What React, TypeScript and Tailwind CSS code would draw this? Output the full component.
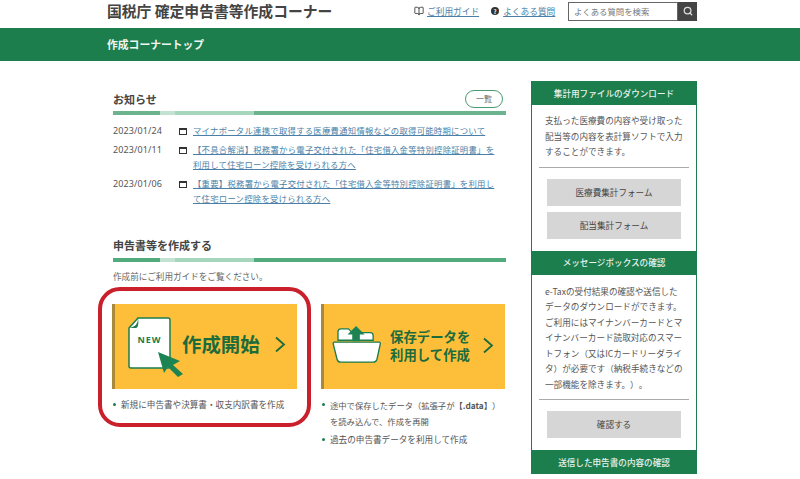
import React from "react";
import { BookOpen, Search } from "lucide-react";

const font = { fontFamily: '"Noto Sans CJK JP","Noto Sans",sans-serif' };

function Rule({ dark = "bg-[#6cb48d]" }: { dark?: string }) {
  return (
    <div className="flex h-[4px] w-[393px]">
      <div className={`w-[47px] ${dark}`} />
      <div className="w-[15px] bg-[#c2e3d1]" />
      <div className="w-[79px] bg-[#a6d6bc]" />
      <div className={`flex-1 ${dark}`} />
    </div>
  );
}

function NoticeRow({ date, text }: { date: string; text: string }) {
  return (
    <div className="flex leading-[15px]">
      <div className="h-[15px] w-[66px] text-[9px] leading-[16px] text-[#555] tracking-[0.1px]" style={{ fontFamily: '"Noto Sans",sans-serif' }}>{date}</div>
      <div className="mt-[5px] h-[7px] w-[8px] shrink-0 border border-t-2 border-[#333]" />
      <div className="ml-[6px] w-[302px] text-[8.33px] tracking-[0.28px] text-[#4b7fa8] underline">{text}</div>
    </div>
  );
}

function DocIcon() {
  return (
    <svg width="60" height="64" viewBox="0 0 60 64" className="mt-[10px] shrink-0 overflow-visible">
      <path d="M10 1H40a2 2 0 0 1 2 2V49a2 2 0 0 1-2 2H3a2 2 0 0 1-2-2V11Z" fill="#fff" stroke="#1c7d4d" strokeWidth="1.5" />
      <path d="M1 11C7 10 10 7 10 1C11 6 10 11 8 11Z" fill="#1c7d4d" />
      <text x="21.5" y="26" textAnchor="middle" fontSize="9" fontWeight="700" letterSpacing="1" fill="#1c7d4d" style={{ fontFamily: '"Noto Sans",sans-serif' }}>NEW</text>
      <path d="M30 35L52 44L45 48L55 57L50 60L40 50L36 56Z" fill="#1c8453" />
    </svg>
  );
}

function FolderIcon() {
  return (
    <svg width="50" height="38" viewBox="0 0 52 40" className="shrink-0">
      <path d="M6 15V6a3 3 0 0 1 3-3H17l4 4H40a3 3 0 0 1 3 3V15Z" fill="#fff" stroke="#1c7d4d" strokeWidth="1.4" />
      <path d="M2 17H49a1.5 1.5 0 0 1 1.5 2L47 35a4 4 0 0 1-4 3H9a4 4 0 0 1-4-3L1 19a1.5 1.5 0 0 1 1-2Z" fill="#fff" stroke="#1c7d4d" strokeWidth="1.4" />
      <path d="M25 0L34 9H29V16H21V9H16Z" fill="#1c8453" />
    </svg>
  );
}

function Chevron() {
  return (
    <svg width="12" height="17" viewBox="0 0 12 17" className="shrink-0">
      <path d="M2 1.5L10 8.5L2 15.5" fill="none" stroke="#1c6b3c" strokeWidth="1.8" />
    </svg>
  );
}

function Bullet({ children, tall }: { children: React.ReactNode; tall?: boolean }) {
  return (
    <div className={`flex whitespace-nowrap text-[#555] ${tall ? "text-[8.3px] leading-[16px]" : "text-[8.6px] leading-[15px]"}`}>
      <div className="mt-[6px] mr-[5px] h-[3px] w-[3px] shrink-0 rounded-full bg-[#1c7d4d]" />
      <div>{children}</div>
    </div>
  );
}

function SideHead({ children }: { children: React.ReactNode }) {
  return (
    <div className="flex h-[24px] items-center justify-center bg-[#1c7d4d] text-[8.6px] font-medium text-[#e6f2ec]">
      {children}
    </div>
  );
}

function SideBtn({ children }: { children: React.ReactNode }) {
  return (
    <div className="mx-[15px] flex h-[27px] items-center justify-center bg-[#d6d6d6] text-[8.6px] text-[#444]">
      {children}
    </div>
  );
}

export default function App() {
  return (
    <div className="relative h-[479px] w-[800px] overflow-hidden bg-white [text-spacing-trim:space-all]" style={font}>
      {/* header */}
      <div className="flex h-[28px] items-center pl-[107px]">
        <div className="w-[307px] pb-[6px] text-[14.8px] font-bold text-[#444]">国税庁 確定申告書等作成コーナー</div>
        <div className="flex w-[154px] items-center pb-[5px] text-[8.7px] text-[#4b7fa8]">
          <BookOpen size={10} strokeWidth={2} className="mr-[3px] text-[#333]" />
          <span className="underline">ご利用ガイド</span>
          <span className="ml-[12px] mr-[4px] flex h-[8px] w-[8px] items-center justify-center rounded-full bg-[#333] text-[6px] font-bold text-white">?</span>
          <span className="underline">よくある質問</span>
        </div>
        <div className="mb-[6px] flex h-[19px] w-[129px]">
          <div className="flex w-[110px] items-center border border-[#666] pl-[5px] text-[8.4px] text-[#777]">よくある質問を検索</div>
          <div className="flex w-[19px] items-center justify-center bg-[#444]">
            <Search size={10} strokeWidth={3} className="text-[#ddd]" />
          </div>
        </div>
      </div>
      <div className="flex h-[33px] items-center bg-[#1c7d4d] pl-[107px] text-[10.8px] font-bold text-[#eef6f1]">
        作成コーナートップ
      </div>

      {/* body */}
      <div className="flex pl-[113px] pt-[20px]">
        <div className="w-[393px]">
          <div className="mt-[9px] mb-[3px] flex h-[18px] items-center justify-between pr-[3px]">
            <div className="text-[11px] font-bold text-[#444]">お知らせ</div>
            <div className="flex h-[18px] w-[38px] items-center justify-center rounded-full border border-[#4a9a72] text-[8px] text-[#666]">一覧</div>
          </div>
          <Rule />
          <div className="mt-[8px] flex flex-col gap-[4px]">
            <NoticeRow date="2023/01/24" text="マイナポータル連携で取得する医療費通知情報などの取得可能時期について" />
            <NoticeRow date="2023/01/11" text="【不具合解消】税務署から電子交付された「住宅借入金等特別控除証明書」を利用して住宅ローン控除を受けられる方へ" />
            <NoticeRow date="2023/01/06" text="【重要】税務署から電子交付された「住宅借入金等特別控除証明書」を利用して住宅ローン控除を受けられる方へ" />
          </div>
          <div className="mt-[30px] flex h-[18px] items-center text-[11px] font-bold text-[#444]">申告書等を作成する</div>
          <div className="mt-[4px]"><Rule dark="bg-[#52ab7c]" /></div>
          <div className="mt-[8px] text-[8.6px] leading-[12px] text-[#666]">作成前にご利用ガイドをご覧ください。</div>

          <div className="mt-[22px] flex gap-[24px]">
            <div className="-ml-[1px] w-[185px]">
              <div className="flex h-[85px] items-center border-l-[3px] border-[#a98a3c] bg-[#fdbf3a] pb-[5px] pl-[13px]">
                <DocIcon />
                <div className="-ml-[6px] text-[19.4px] font-bold leading-none text-[#1c6b3c]">作成開始</div>
                <div className="ml-[14px]"><Chevron /></div>
              </div>
              <div className="mt-[8px] pl-[1px]">
                <Bullet>新規に申告書や決算書・収支内訳書を作成</Bullet>
              </div>
            </div>
            <div className="w-[184px]">
              <div className="flex h-[85px] items-center border-l-[3px] border-[#a98a3c] bg-[#fdbf3a] pb-[3px] pl-[8px]">
                <FolderIcon />
                <div className="ml-[8px] text-[13.4px] font-bold leading-[18px] text-[#1c6b3c]">保存データを<br />利用して作成</div>
                <div className="ml-[12px]"><Chevron /></div>
              </div>
              <div className="mt-[8px] flex flex-col gap-[3px] pl-[1px]">
                <Bullet tall>途中で保存したデータ（拡張子が<span className="font-bold">【.data】</span>）<br />を読み込んで、作成を再開</Bullet>
                <Bullet>過去の申告書データを利用して作成</Bullet>
              </div>
            </div>
          </div>
        </div>

        {/* sidebar */}
        <div className="ml-[25px] h-[393px] w-[166px] border-x border-[#1c7d4d]">
          <SideHead>集計用ファイルのダウンロード</SideHead>
          <div className="px-[13px] pt-[8px] text-[8.6px] leading-[15.5px] text-[#555]">
            支払った医療費の内容や受け取った配当等の内容を表計算ソフトで入力することができます。
          </div>
          <div className="mx-[7px] mt-[7px] h-px bg-[#aaa]" />
          <div className="mt-[11px] flex flex-col gap-[6px]">
            <SideBtn>医療費集計フォーム</SideBtn>
            <SideBtn>配当集計フォーム</SideBtn>
          </div>
          <div className="mt-[12px]"><SideHead>メッセージボックスの確認</SideHead></div>
          <div className="px-[13px] pt-[9px] text-[8.6px] leading-[15.5px] text-[#555]">
            e-Taxの受付結果の確認や送信したデータのダウンロードができます。ご利用にはマイナンバーカードとマイナンバーカード読取対応のスマートフォン（又はICカードリーダライタ）が必要です（納税手続きなどの一部機能を除きます。）。
          </div>
          <div className="mx-[7px] mt-[7px] h-px bg-[#aaa]" />
          <div className="mt-[11px]"><SideBtn>確認する</SideBtn></div>
          <div className="mt-[12px]"><SideHead>送信した申告書の内容の確認</SideHead></div>
        </div>
      </div>

      {/* hand-drawn highlight over the content */}
      <div className="absolute left-[98px] top-[287px] h-[140px] w-[213px] rounded-[22px] border-[4px] border-[#c9202c]" />
    </div>
  );
}
